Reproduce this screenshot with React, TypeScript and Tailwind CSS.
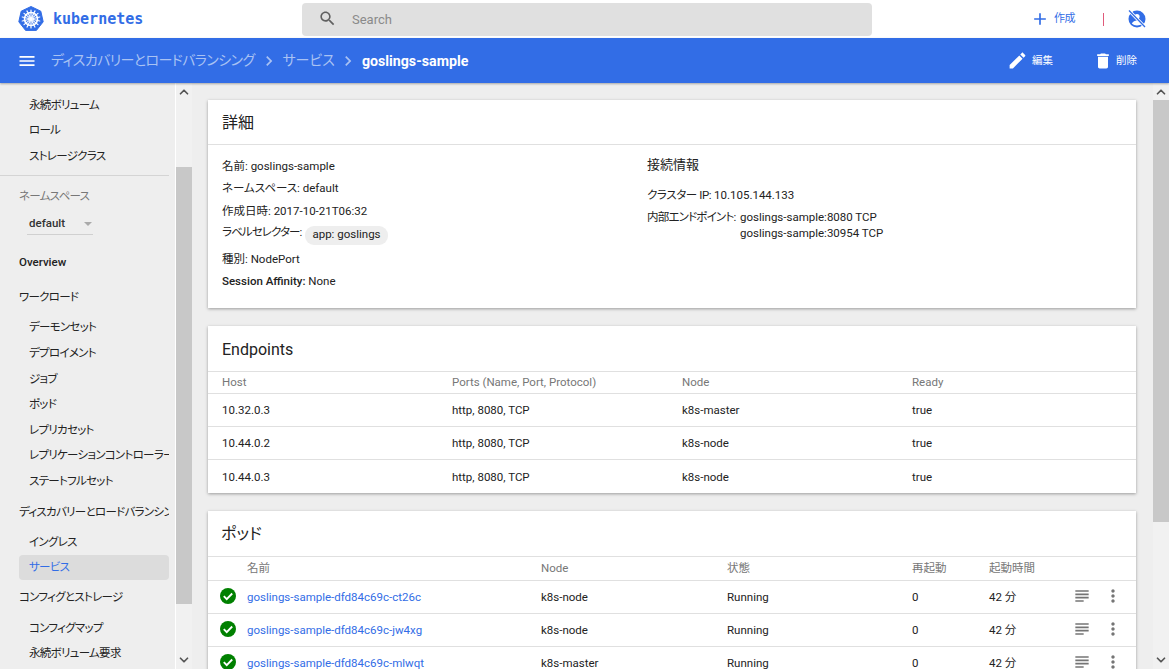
import { ChevronUp, ChevronDown } from "lucide-react";

// material icon paths, same set the dashboard uses
const paths = {
	search: "M15.5 14h-.79l-.28-.27C15.41 12.59 16 11.11 16 9.5 16 5.91 13.09 3 9.5 3S3 5.91 3 9.5 5.91 16 9.5 16c1.61 0 3.09-.59 4.23-1.57l.27.28v.79l5 4.99L20.49 19l-4.99-5zm-6 0C7.01 14 5 11.99 5 9.5S7.01 5 9.5 5 14 7.01 14 9.5 11.99 14 9.5 14z",
	menu: "M3 18h18v-2H3v2zm0-5h18v-2H3v2zm0-7v2h18V6H3z",
	add: "M19 13h-6v6h-2v-6H5v-2h6V5h2v6h6v2z",
	edit: "M3 17.25V21h3.75L17.81 9.94l-3.75-3.75L3 17.25zM20.71 7.04c.39-.39.39-1.02 0-1.41l-2.34-2.34c-.39-.39-1.02-.39-1.41 0l-1.83 1.83 3.75 3.75 1.83-1.83z",
	trash: "M6 19c0 1.1.9 2 2 2h8c1.1 0 2-.9 2-2V7H6v12zM19 4h-3.5l-1-1h-5l-1 1H5v2h14V4z",
	chevron: "M10 6L8.59 7.41 13.17 12l-4.58 4.59L10 18l6-6z",
	subject: "M14 17H4v2h10v-2zm6-8H4v2h16V9zM4 15h16v-2H4v2zM4 5v2h16V5H4z",
	more: "M12 8c1.1 0 2-.9 2-2s-.9-2-2-2-2 .9-2 2 .9 2 2 2zm0 2c-1.1 0-2 .9-2 2s.9 2 2 2 2-.9 2-2-.9-2-2-2zm0 6c-1.1 0-2 .9-2 2s.9 2 2 2 2-.9 2-2-.9-2-2-2z",
};

const Mi = ({ name, size, className = "" }: { name: keyof typeof paths; size: number; className?: string }) => (
	<svg width={size} height={size} viewBox="0 0 24 24" fill="currentColor" className={`shrink-0 ${className}`}>
		<path d={paths[name]} />
	</svg>
);

const Wheel = () => (
	<svg width="26" height="26" viewBox="0 0 26 26">
		<polygon points="13,0.5 22.8,5.2 25.2,15.8 18.4,24.4 7.6,24.4 0.8,15.8 3.2,5.2" fill="#326de6" stroke="#326de6" strokeLinejoin="round" />
		<circle cx="13" cy="13" r="6.5" fill="none" stroke="#fff" strokeWidth="1.6" />
		<g stroke="#fff" strokeWidth="1.2" strokeLinecap="round">
			<line x1="13" y1="4" x2="13" y2="22" />
			<line x1="20" y1="7.4" x2="6" y2="18.6" />
			<line x1="21.8" y1="15" x2="4.2" y2="11" />
			<line x1="16.9" y1="21.1" x2="9.1" y2="4.9" />
			<line x1="9.1" y1="21.1" x2="16.9" y2="4.9" />
			<line x1="4.2" y1="15" x2="21.8" y2="11" />
			<line x1="6" y1="7.4" x2="20" y2="18.6" />
		</g>
	</svg>
);

const UserOff = () => (
	<svg width="20" height="20" viewBox="0 0 20 20">
		<circle cx="10" cy="10" r="8.5" fill="#326de6" />
		<circle cx="10" cy="7.6" r="2.6" fill="#fff" />
		<path d="M4.8 14.6c1-2.4 3.2-3.2 5.2-3.2s4.200.8 5.200 3.2c-1.300 1.300-3.200 2-5.200 2s-3.900-.7-5.200-2z" fill="#fff" />
		<line x1="2" y1="1.500" x2="18" y2="18" stroke="#fff" strokeWidth="3.200" />
		<line x1="2" y1="1.500" x2="18" y2="18" stroke="#326de6" strokeWidth="1.300" />
	</svg>
);

const CheckCircle = () => (
	<svg width="16" height="16" viewBox="0 0 16 16">
		<circle cx="8" cy="8" r="8" fill="#008000" />
		<path d="M3.800 8.200l2.900 2.900 5.500-5.600" fill="none" stroke="#fff" strokeWidth="1.900" />
	</svg>
);

const Card = ({ title, children, titleClass = "h-[46px]" }: { title: string; children: React.ReactNode; titleClass?: string }) => (
	<div className="bg-white shadow-[0_1px_3px_rgba(0,0,0,0.35)]">
		<div className={`flex items-center px-[14px] text-[16px] text-[#222] border-b border-[#e0e0e0] ${titleClass}`}>{title}</div>
		{children}
	</div>
);

const SideItem = ({ label, active }: { label: string; active?: boolean }) => (
	<div className={`h-[25.6px] ml-[19px] mr-[6px] pl-[10px] pt-px flex items-center whitespace-nowrap overflow-hidden rounded-sm ${active ? "bg-[#dcdcdc] text-[#326de6]" : "text-[#222]"}`}>{label}</div>
);

const SideHead = ({ label, className = "" }: { label: string; className?: string }) => (
	<div className={`ml-[19px] mr-[6px] flex items-center whitespace-nowrap overflow-hidden text-[#222] ${className}`}>{label}</div>
);

const Sidebar = () => (
	<aside className="w-[176px] shrink-0 bg-[#eeeeee] border-r border-white pt-[9px] overflow-hidden text-[11.5px] tracking-[-0.7px]">
		<SideItem label="永続ボリューム" />
		<SideItem label="ロール" />
		<SideItem label="ストレージクラス" />
		<div className="mt-[6px] mr-[6px] border-t border-[#d4d4d4]" />
		<div className="h-[38px] ml-[19px] pt-[12px] text-[#777]">ネームスペース</div>
		<div className="ml-[27px] w-[66px] h-[21px] border-b border-[#d0d0d0] flex items-center justify-between pl-[2px] pr-[1px] font-medium text-[#333] tracking-normal">
			default
			<span className="w-0 h-0 border-x-4 border-x-transparent border-t-4 border-t-[#aaa]" />
		</div>
		<SideHead label="Overview" className="h-[25px] mt-[15px] font-medium tracking-normal" />
		<SideHead label="ワークロード" className="h-[25px] mt-[10px]" />
		<div className="mt-[5px]">
			{["デーモンセット", "デプロイメント", "ジョブ", "ポッド", "レプリカセット", "レプリケーションコントローラー", "ステートフルセット"].map((label) => (
				<SideItem key={label} label={label} />
			))}
		</div>
		<SideHead label="ディスカバリーとロードバランシング" className="h-[25px] mt-[6px]" />
		<div className="mt-[4px]">
			<SideItem label="イングレス" />
			<SideItem label="サービス" active />
		</div>
		<SideHead label="コンフィグとストレージ" className="h-[25px] mt-[5px]" />
		<div className="mt-[5px]">
			<SideItem label="コンフィグマップ" />
			<SideItem label="永続ボリューム要求" />
		</div>
	</aside>
);

const ScrollBar = ({ before, thumb }: { before: number; thumb: number }) => (
	<div className="relative w-[16px] shrink-0 bg-[#f1f1f1] h-full overflow-hidden">
		<ChevronUp size={14} strokeWidth={3} className="absolute top-[2px] left-px text-[#555]" />
		<div className="absolute left-0 w-full bg-[#c8c8c8]" style={{ top: before, height: thumb }} />
		<ChevronDown size={14} strokeWidth={3} className="absolute bottom-[2px] left-px text-[#555]" />
	</div>
);

const endpoints = [
	["10.32.0.3", "http, 8080, TCP", "k8s-master", "true"],
	["10.44.0.2", "http, 8080, TCP", "k8s-node", "true"],
	["10.44.0.3", "http, 8080, TCP", "k8s-node", "true"],
];

const pods = [
	["goslings-sample-dfd84c69c-ct26c", "k8s-node"],
	["goslings-sample-dfd84c69c-jw4xg", "k8s-node"],
	["goslings-sample-dfd84c69c-mlwqt", "k8s-master"],
];

const podCols = "grid grid-cols-[39px_294px_186px_185px_77px_83px_31px_1fr] items-center";

export default function App() {
	return (
		<div className="h-[669px] w-[1169px] overflow-hidden flex flex-col bg-[#eeeeee] text-[11.5px] text-[#222] font-['Roboto','Noto_Sans_CJK_JP',sans-serif] [font-feature-settings:'palt']">
			<header className="h-[38px] shrink-0 bg-white flex items-center">
				<div className="w-[302px] shrink-0 flex items-center pl-[18px]">
					<Wheel />
					<span className="ml-[9px] font-['DejaVu_Sans_Mono',monospace] font-bold text-[15px] text-[#326de6]">kubernetes</span>
				</div>
				<div className="w-[570px] h-[33px] bg-[#e0e0e0] rounded-sm flex items-center pl-[16px]">
					<Mi name="search" size={19} className="text-[#616161] -mt-[2px]" />
					<span className="ml-[15px] text-[13px] text-[#8a8a8a] mt-px">Search</span>
				</div>
				<div className="flex items-center text-[#326de6] ml-[158px]">
					<Mi name="add" size={20} />
					<span className="ml-[4px] w-[22px] mt-px text-[11px] tracking-[-0.5px] whitespace-nowrap">作成</span>
					<span className="ml-[27px] w-px h-[13px] bg-[#e05a7a]" />
					<span className="ml-[23px]"><UserOff /></span>
				</div>
			</header>
			<div className="relative z-10 h-[45px] shrink-0 bg-[#326de6] flex items-center text-white shadow-[0_1px_2px_rgba(0,0,0,0.3)]">
				<Mi name="menu" size={20} className="ml-[17px]" />
				<span className="ml-[14px] text-[14px] tracking-[-0.6px] text-[#a9c2f3] whitespace-nowrap">ディスカバリーとロードバランシング</span>
				<Mi name="chevron" size={20} className="ml-[5px] text-[#a9c2f3]" />
				<span className="ml-[3px] text-[14px] text-[#a9c2f3]">サービス</span>
				<Mi name="chevron" size={20} className="ml-[3px] text-[#a9c2f3]" />
				<span className="ml-[4px] mt-[2px] text-[14.2px] font-bold">goslings-sample</span>
				<div className="ml-auto mr-[32px] flex items-center text-[10.5px]">
					<Mi name="edit" size={21} />
					<span className="ml-[4px] mr-[40px]">編集</span>
					<Mi name="trash" size={20} />
					<span className="ml-[3px]">削除</span>
				</div>
			</div>
			<div className="flex-1 min-h-0 flex">
				<Sidebar />
				<ScrollBar before={84} thumb={437} />
				<main className="flex-1 min-w-0 pt-[17px] pl-[16px] pr-[17px] overflow-hidden flex flex-col gap-[18px]">
					<Card title="詳細" titleClass="h-[45px] pt-px">
						<div className="h-[163px] pl-[14px] grid grid-cols-[425px_1fr]">
							<div className="pt-[11px]">
								<div className="h-[22px] flex items-center">名前: goslings-sample</div>
								<div className="h-[22px] flex items-center">ネームスペース: default</div>
								<div className="h-[23px] flex items-center">作成日時: 2017-10-21T06:32</div>
								<div className="h-[20px] flex items-center">
									<span className="tracking-[-0.9px]">ラベルセレクター:</span>
									<span className="ml-[4px] mt-[4px] h-[19px] px-[7px] rounded-[9px] bg-[#eeeeee] flex items-center">app: goslings</span>
								</div>
								<div className="h-[29px] mt-[2px] flex items-center">種別: NodePort</div>
								<div className="h-[16px] flex items-center"><span className="font-medium">Session Affinity:</span>&nbsp;None</div>
							</div>
							<div className="pt-[11px]">
								<div className="text-[13px] h-[18px] flex items-center">接続情報</div>
								<div className="mt-[11px] h-[22px] flex items-center"><span className="tracking-[-0.4px]">クラスター IP:</span>&nbsp;10.105.144.133</div>
								<div className="flex leading-[16px] pt-[2px]">
									<span className="w-[93px] whitespace-nowrap tracking-[-0.8px]">内部エンドポイント:</span>
									<div>
										<div>goslings-sample:8080 TCP</div>
										<div>goslings-sample:30954 TCP</div>
									</div>
								</div>
							</div>
						</div>
					</Card>
					<Card title="Endpoints" titleClass="h-[46px] pt-[3px]">
						<div className="grid grid-cols-[230px_230px_230px_1fr] pl-[14px] pt-px h-[22px] items-center text-[#777] border-b border-[#e0e0e0]">
							<span>Host</span>
							<span>Ports (Name, Port, Protocol)</span>
							<span>Node</span>
							<span>Ready</span>
						</div>
						{endpoints.map((row, i) => (
							<div key={row[0]} className={`grid grid-cols-[230px_230px_230px_1fr] pl-[14px] pt-[2px] h-[33px] items-center ${i < 2 ? "border-b border-[#e0e0e0]" : ""}`}>
								{row.map((cell, j) => (
									<span key={j}>{cell}</span>
								))}
							</div>
						))}
					</Card>
					<Card title="ポッド" titleClass="h-[46px] pl-[13px]">
						<div className={`${podCols} h-[24px] text-[#777] border-b border-[#e0e0e0]`}>
							<span />
							<span>名前</span>
							<span>Node</span>
							<span>状態</span>
							<span>再起動</span>
							<span>起動時間</span>
						</div>
						{pods.map((row) => (
							<div key={row[0]} className={`${podCols} h-[33px] pt-px border-b border-[#e0e0e0]`}>
								<span className="pl-[12px] -mt-[3px]"><CheckCircle /></span>
								<span className="text-[#326de6]">{row[0]}</span>
								<span>{row[1]}</span>
								<span>Running</span>
								<span>0</span>
								<span>42 分</span>
								<Mi name="subject" size={20} className="text-[#757575] -mt-[4px]" />
								<Mi name="more" size={20} className="text-[#757575] -mt-[4px]" />
							</div>
						))}
					</Card>
				</main>
				<ScrollBar before={17} thumb={422} />
			</div>
		</div>
	);
}
